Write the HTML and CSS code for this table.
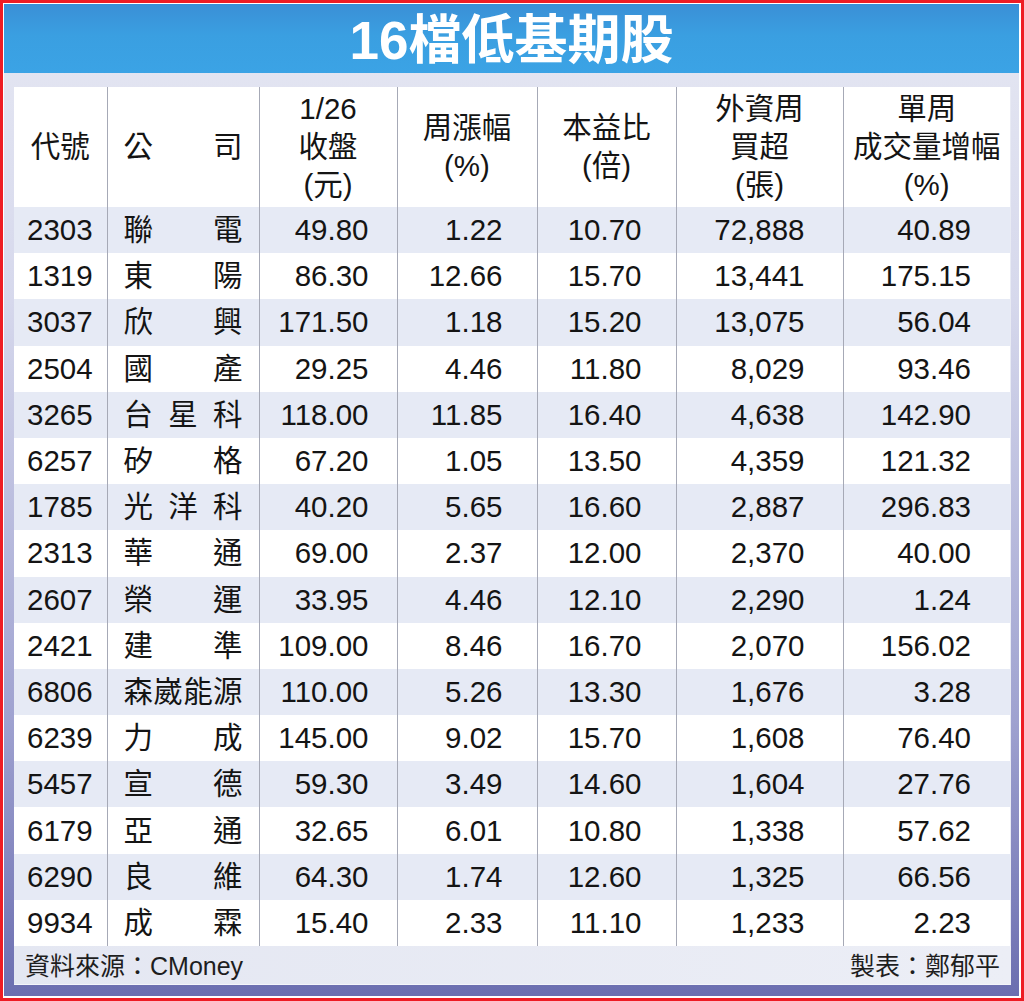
FILE: index.html
```html
<!DOCTYPE html>
<html lang="zh-Hant">
<head>
<meta charset="utf-8">
<title>16檔低基期股</title>
<link rel="stylesheet" href="styles.css">
</head>
<body>
<div class="page">
  <div class="frame">
    <h1 class="title">16檔低基期股</h1>
    <div class="table-wrap">
      <table class="stocks">
        <colgroup>
          <col class="c1"><col class="c2"><col class="c3"><col class="c4"><col class="c5"><col class="c6"><col class="c7">
        </colgroup>
        <thead>
          <tr>
            <th class="h-code">代號</th>
            <th class="h-name">公司</th>
            <th>1/26<br>收盤<br>(元)</th>
            <th>周漲幅<br>(%)</th>
            <th>本益比<br>(倍)</th>
            <th>外資周<br>買超<br>(張)</th>
            <th>單周<br>成交量增幅<br>(%)</th>
          </tr>
        </thead>
        <tbody>
          <tr><td class="code">2303</td><td class="name">聯電</td><td class="n3">49.80</td><td class="n4">1.22</td><td class="n5">10.70</td><td class="n6">72,888</td><td class="n7">40.89</td></tr>
          <tr><td class="code">1319</td><td class="name">東陽</td><td class="n3">86.30</td><td class="n4">12.66</td><td class="n5">15.70</td><td class="n6">13,441</td><td class="n7">175.15</td></tr>
          <tr><td class="code">3037</td><td class="name">欣興</td><td class="n3">171.50</td><td class="n4">1.18</td><td class="n5">15.20</td><td class="n6">13,075</td><td class="n7">56.04</td></tr>
          <tr><td class="code">2504</td><td class="name">國產</td><td class="n3">29.25</td><td class="n4">4.46</td><td class="n5">11.80</td><td class="n6">8,029</td><td class="n7">93.46</td></tr>
          <tr><td class="code">3265</td><td class="name">台星科</td><td class="n3">118.00</td><td class="n4">11.85</td><td class="n5">16.40</td><td class="n6">4,638</td><td class="n7">142.90</td></tr>
          <tr><td class="code">6257</td><td class="name">矽格</td><td class="n3">67.20</td><td class="n4">1.05</td><td class="n5">13.50</td><td class="n6">4,359</td><td class="n7">121.32</td></tr>
          <tr><td class="code">1785</td><td class="name">光洋科</td><td class="n3">40.20</td><td class="n4">5.65</td><td class="n5">16.60</td><td class="n6">2,887</td><td class="n7">296.83</td></tr>
          <tr><td class="code">2313</td><td class="name">華通</td><td class="n3">69.00</td><td class="n4">2.37</td><td class="n5">12.00</td><td class="n6">2,370</td><td class="n7">40.00</td></tr>
          <tr><td class="code">2607</td><td class="name">榮運</td><td class="n3">33.95</td><td class="n4">4.46</td><td class="n5">12.10</td><td class="n6">2,290</td><td class="n7">1.24</td></tr>
          <tr><td class="code">2421</td><td class="name">建準</td><td class="n3">109.00</td><td class="n4">8.46</td><td class="n5">16.70</td><td class="n6">2,070</td><td class="n7">156.02</td></tr>
          <tr><td class="code">6806</td><td class="name">森崴能源</td><td class="n3">110.00</td><td class="n4">5.26</td><td class="n5">13.30</td><td class="n6">1,676</td><td class="n7">3.28</td></tr>
          <tr><td class="code">6239</td><td class="name">力成</td><td class="n3">145.00</td><td class="n4">9.02</td><td class="n5">15.70</td><td class="n6">1,608</td><td class="n7">76.40</td></tr>
          <tr><td class="code">5457</td><td class="name">宣德</td><td class="n3">59.30</td><td class="n4">3.49</td><td class="n5">14.60</td><td class="n6">1,604</td><td class="n7">27.76</td></tr>
          <tr><td class="code">6179</td><td class="name">亞通</td><td class="n3">32.65</td><td class="n4">6.01</td><td class="n5">10.80</td><td class="n6">1,338</td><td class="n7">57.62</td></tr>
          <tr><td class="code">6290</td><td class="name">良維</td><td class="n3">64.30</td><td class="n4">1.74</td><td class="n5">12.60</td><td class="n6">1,325</td><td class="n7">66.56</td></tr>
          <tr><td class="code">9934</td><td class="name">成霖</td><td class="n3">15.40</td><td class="n4">2.33</td><td class="n5">11.10</td><td class="n6">1,233</td><td class="n7">2.23</td></tr>
        </tbody>
      </table>
      <div class="footer">
        <span>資料來源：CMoney</span>
        <span>製表：鄭郁平</span>
      </div>
    </div>
  </div>
</div>
</body>
</html>
```
FILE: styles.css
```css
* { box-sizing: border-box; }
html, body { margin: 0; padding: 0; background: #fff; }
body {
  font-family: "Liberation Sans", "Noto Sans CJK TC", sans-serif;
  color: #141414;
}
.page {
  width: 1024px;
  height: 1001px;
  border: 3px solid #ee1c24;
  padding: 1px 2px 2px 1px;
  background: #fff;
}
.frame {
  height: 100%;
  display: flex;
  flex-direction: column;
  background: linear-gradient(to bottom, #e6e8f3 0%, #d6d8ec 30%, #9fa2d0 72%, #6b6eb0 100%);
  padding: 0 8px 11px 10px;
}
.title {
  margin: 0 -8px 0 -10px;
  height: 69px;
  flex: none;
  display: flex;
  align-items: center;
  justify-content: center;
  background: linear-gradient(to bottom, #3a8fd6 0%, #3a9fe1 45%, #3ba3e5 100%);
  color: #fff;
  font-family: "Liberation Sans", "Noto Sans CJK TC", sans-serif;
  font-weight: 700;
  font-size: 53px;
  letter-spacing: 0;
  padding-bottom: 5px;
}
.table-wrap {
  margin-top: 14px;
  flex: 1;
  display: flex;
  flex-direction: column;
  background: #e8eaf4;
}
.stocks {
  width: 996px;
  border-collapse: collapse;
  table-layout: fixed;
  font-size: 29.5px;
}
.c1 { width: 93px; }
.c2 { width: 152px; }
.c3 { width: 138px; }
.c4 { width: 140px; }
.c5 { width: 139px; }
.c6 { width: 167px; }
.c7 { width: 167px; }
.stocks th, .stocks td {
  padding: 0;
  vertical-align: middle;
  white-space: nowrap;
}
.stocks th + th, .stocks td + td {
  border-left: 1px solid #a6a9b6;
}
.stocks thead tr {
  height: 120px;
  background: #fff;
}
.stocks th {
  font-weight: 400;
  line-height: 38px;
  text-align: center;
}
.stocks th.h-name, .stocks td.name {
  text-align: justify;
  text-align-last: justify;
  padding: 0 16px;
}
.stocks tbody tr {
  height: 46.2px;
  background: #fff;
}
.stocks tbody tr:nth-child(odd) {
  background: #e6eaf5;
}
.stocks td {
  line-height: 34px;
  text-align: right;
}
.stocks td.code { text-align: left; padding-left: 13px; }
.stocks td.n3 { padding-right: 28px; }
.stocks td.n4 { padding-right: 34px; }
.stocks td.n5 { padding-right: 34px; }
.stocks td.n6 { padding-right: 38px; }
.stocks td.n7 { padding-right: 39px; }
.footer {
  flex: 1;
  display: flex;
  align-items: center;
  justify-content: space-between;
  padding: 0 11px 2px 11px;
  font-size: 25px;
  color: #1e1e1e;
  background: linear-gradient(to right, #e4e7f2, #eceef6);
  border-bottom: 1px solid #f4f5fa;
}
```
